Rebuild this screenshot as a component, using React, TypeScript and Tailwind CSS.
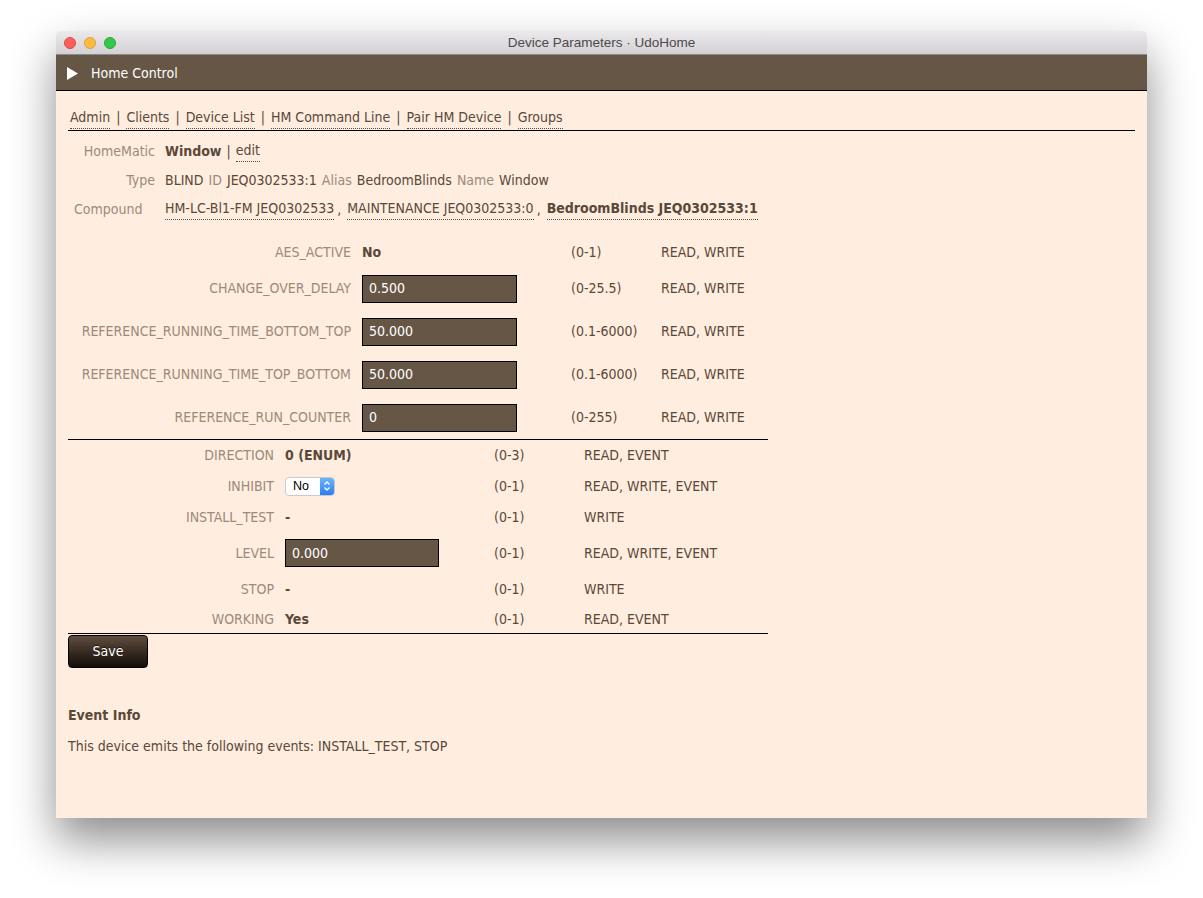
import React from "react";

const F = "font-['DejaVu_Sans_Condensed','DejaVu_Sans',sans-serif]";

function Link({ children, bold }: { children: React.ReactNode; bold?: boolean }) {
  return (
    <span className={`border-b border-dotted border-[#5a4838] ${bold ? "font-bold" : ""}`}>{children}</span>
  );
}

function Input({ value, w = "w-[155px]" }: { value: string; w?: string }) {
  return (
    <div className={`${w} h-[28px] bg-[#665646] border border-black text-white font-normal flex items-center pl-[6px]`}>{value}</div>
  );
}

function Select() {
  return (
    <div className="w-[50px] h-[19px] bg-white rounded-[4px] border border-[#c9c9c9] flex items-center text-[12.5px] text-black font-normal overflow-hidden font-['Liberation_Sans',sans-serif]">
      <span className="flex-1 pl-[7px]">No</span>
      <span className="w-[14px] h-full bg-gradient-to-b from-[#6cb3fa] to-[#2a7df6] flex items-center justify-center">
        <svg width="8" height="12" viewBox="0 0 8 12" fill="none" stroke="white" strokeWidth="1.3">
          <path d="M1.5 4.5 L4 2 L6.5 4.5" />
          <path d="M1.5 7.5 L4 10 L6.5 7.5" />
        </svg>
      </span>
    </div>
  );
}

const table1 = [
  { name: "AES_ACTIVE", val: <b className="text-[#5a4838]">No</b>, range: "(0-1)", ops: "READ, WRITE", h: "h-[29px]" },
  { name: "CHANGE_OVER_DELAY", val: <Input value="0.500" />, range: "(0-25.5)", ops: "READ, WRITE", h: "h-[43px]" },
  { name: "REFERENCE_RUNNING_TIME_BOTTOM_TOP", val: <Input value="50.000" />, range: "(0.1-6000)", ops: "READ, WRITE", h: "h-[43px]" },
  { name: "REFERENCE_RUNNING_TIME_TOP_BOTTOM", val: <Input value="50.000" />, range: "(0.1-6000)", ops: "READ, WRITE", h: "h-[43px]" },
  { name: "REFERENCE_RUN_COUNTER", val: <Input value="0" />, range: "(0-255)", ops: "READ, WRITE", h: "h-[43px]" },
];

const table2 = [
  { name: "DIRECTION", val: <b>0 (ENUM)</b>, range: "(0-3)", ops: "READ, EVENT", h: "h-[31px]" },
  { name: "INHIBIT", val: <Select />, range: "(0-1)", ops: "READ, WRITE, EVENT", h: "h-[30px]" },
  { name: "INSTALL_TEST", val: <b>-</b>, range: "(0-1)", ops: "WRITE", h: "h-[32px]" },
  { name: "LEVEL", val: <Input value="0.000" w="w-[154px]" />, range: "(0-1)", ops: "READ, WRITE, EVENT", h: "h-[40px]" },
  { name: "STOP", val: <b>-</b>, range: "(0-1)", ops: "WRITE", h: "h-[32px]" },
  { name: "WORKING", val: <b>Yes</b>, range: "(0-1)", ops: "READ, EVENT", h: "h-[28px]" },
];

export default function App() {
  return (
    <div className="w-[1203px] h-[898px] bg-white pt-[31px] pl-[56px] overflow-hidden">
      <div className="w-[1091px] h-[787px] rounded-t-[5px] overflow-hidden shadow-[0_22px_45px_rgba(0,0,0,0.45)] flex flex-col bg-[#ffeddf]">
        {/* title bar */}
        <div className="h-[24px] bg-gradient-to-b from-[#ebe9eb] to-[#d3d1d3] border-b border-[#8a8a8a] relative flex items-center justify-center pt-[2px]">
          <div className="absolute left-[8px] top-[6px] flex gap-[8px]">
            <span className="w-[12px] h-[12px] rounded-full bg-[#fc605c] border border-[#de4a45]" />
            <span className="w-[12px] h-[12px] rounded-full bg-[#fdbc40] border border-[#dea235]" />
            <span className="w-[12px] h-[12px] rounded-full bg-[#34c84a] border border-[#27aa35]" />
          </div>
          <span className="text-[13.5px] text-[#4a4a4a] font-['Liberation_Sans',sans-serif]">Device Parameters · UdoHome</span>
        </div>
        {/* header */}
        <div className={`h-[36px] bg-[#665646] border-b border-black flex items-center pl-[11px] pt-[1px] text-white text-[14px] ${F}`}>
          <svg width="11" height="13" viewBox="0 0 11 13" className="mr-[13px]">
            <path d="M0 0 L11 6.5 L0 13 Z" fill="white" />
          </svg>
          Home Control
        </div>
        {/* content */}
        <div className={`flex-1 px-[12px] text-[14px] text-[#5a4838] ${F}`}>
          <div className="mt-[17px] pl-[2px] pb-[3px] border-b border-black flex items-center h-[23px]">
            <Link>Admin</Link>
            <span className="mx-[6px]">|</span>
            <Link>Clients</Link>
            <span className="mx-[6px]">|</span>
            <Link>Device List</Link>
            <span className="mx-[6px]">|</span>
            <Link>HM Command Line</Link>
            <span className="mx-[6px]">|</span>
            <Link>Pair HM Device</Link>
            <span className="mx-[6px]">|</span>
            <Link>Groups</Link>
          </div>

          <div className="mt-[10px] flex items-center h-[20px]">
            <span className="w-[87px] text-right text-[#9c8a7a]">HomeMatic</span>
            <span className="ml-[10px] font-bold">Window</span>
            <span className="mx-[5px]">|</span>
            <Link>edit</Link>
          </div>
          <div className="mt-[9px] flex items-center h-[20px] gap-[5px]">
            <span className="w-[87px] text-right text-[#9c8a7a]">Type</span>
            <span className="ml-[5px]">BLIND</span>
            <span className="text-[#9c8a7a]">ID</span>
            <span>JEQ0302533:1</span>
            <span className="text-[#9c8a7a]">Alias</span>
            <span>BedroomBlinds</span>
            <span className="text-[#9c8a7a]">Name</span>
            <span>Window</span>
          </div>
          <div className="mt-[9px] flex items-center h-[20px]">
            <span className="w-[97px] pl-[6px] text-[#9c8a7a]">Compound</span>
            <Link>HM-LC-Bl1-FM JEQ0302533</Link>
            <span className="ml-[3px] mr-[6px]">,</span>
            <Link>MAINTENANCE JEQ0302533:0</Link>
            <span className="ml-[3px] mr-[6px]">,</span>
            <Link bold>BedroomBlinds JEQ0302533:1</Link>
          </div>

          {/* table 1 */}
          <div className="mt-[19px] w-[700px] border-b border-black">
            {table1.map((r) => (
              <div key={r.name} className={`${r.h} flex items-center`}>
                <span className="w-[283px] text-right text-[#9c8a7a]">{r.name}</span>
                <span className="w-[220px] pl-[11px]">{r.val}</span>
                <span className="w-[90px]">{r.range}</span>
                <span>{r.ops}</span>
              </div>
            ))}
          </div>
          {/* table 2 */}
          <div className="w-[700px] border-b border-black">
            {table2.map((r) => (
              <div key={r.name} className={`${r.h} flex items-center`}>
                <span className="w-[206px] text-right text-[#9c8a7a]">{r.name}</span>
                <span className="w-[220px] pl-[11px]">{r.val}</span>
                <span className="w-[90px]">{r.range}</span>
                <span>{r.ops}</span>
              </div>
            ))}
          </div>
          <button className="mt-[1px] w-[80px] h-[33px] rounded-[4px] bg-gradient-to-b from-[#5f4e3f] to-[#150e09] border border-black text-white text-[14px] [text-shadow:0_-1px_0_rgba(0,0,0,0.6)]">
            Save
          </button>

          <div className="mt-[37px] font-bold">Event Info</div>
          <div className="mt-[10px]">This device emits the following events: INSTALL_TEST, STOP</div>
        </div>
      </div>
    </div>
  );
}
